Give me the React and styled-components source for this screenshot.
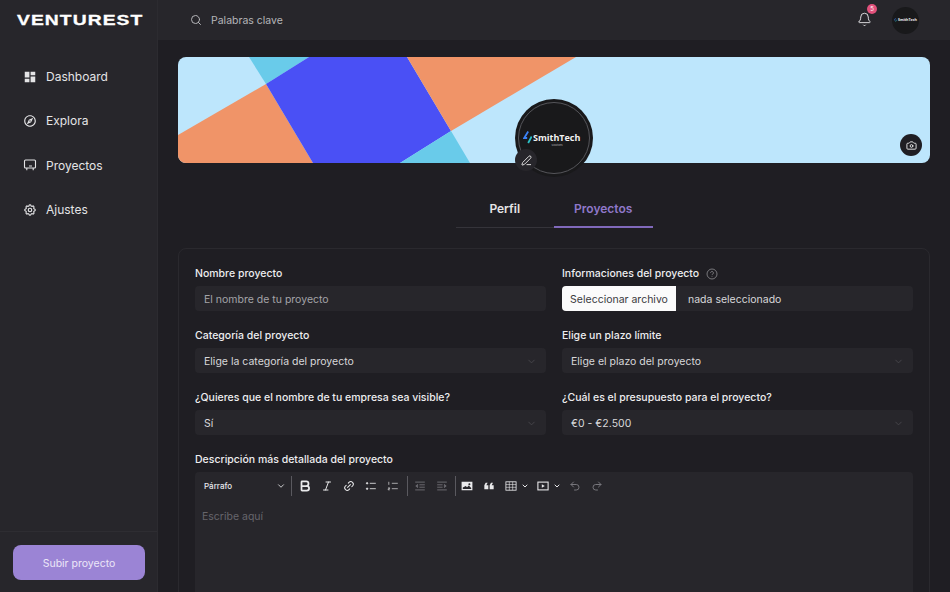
import React from "react";
import styled, { createGlobalStyle } from "styled-components";
import { MdDashboard, MdOutlineExplore, MdFormatQuote } from "react-icons/md";
import { TbSettings } from "react-icons/tb";
import { Search, Bell, Camera, ChevronDown, Bold, Italic, Link2, Undo2, Redo2, PenLine } from "lucide-react";

const Global = createGlobalStyle`
  html, body { margin: 0; height: 100%; background: #1f1e23; overflow: hidden; }
  * { box-sizing: border-box; }
  body { font-family: Inter, "Noto Sans", sans-serif; color: #e8e8ea; }
`;
const Shell = styled.div`display: flex; width: 950px; height: 592px; overflow: hidden;`;
const Sidebar = styled.aside`
  width: 158px; flex: none; display: flex; flex-direction: column; background: #27262b;
  border-right: 1px solid #2c2b30;
`;
const Brand = styled.div`height: 40px; display: flex; align-items: center; padding-left: 17px; overflow: hidden;`;
const BrandText = styled.span`
  font-family: "Liberation Sans", sans-serif; font-weight: 700; font-size: 14.5px; letter-spacing: .8px; color: #fff;
  transform: scaleX(1.33); transform-origin: left center; white-space: nowrap;
  -webkit-text-stroke: .3px #fff;
`;
const Nav = styled.nav`flex: 1; display: flex; flex-direction: column; padding: 14.5px 0 0 23px;`;
const NavItem = styled.a`
  height: 44.3px; display: flex; align-items: center; gap: 9px; font-size: 12px; color: #e4e4e6;
  svg { width: 14px; height: 14px; flex: none; }
`;
const SideFoot = styled.div`height: 61px; border-top: 1px solid #2e2d32; padding: 13px 13px 0;`;
const Upload = styled.button`
  width: 132px; height: 35px; border: 0; border-radius: 8px; background: #9b84d5; color: #ece6f8; padding: 2px 0 0;
  font: 400 10.5px Inter, sans-serif;
`;
const Column = styled.div`flex: 1; min-width: 0; display: flex; flex-direction: column;`;
const Header = styled.header`
  height: 40px; flex: none; background: #27262b; display: flex; align-items: center; padding: 0 31px 0 32px;
`;
const SearchBox = styled.div`flex: 1; display: flex; align-items: center; gap: 9px; color: #b5b5b9; font-size: 10.5px; svg { width: 12px; height: 12px; }`;
const BellWrap = styled.div`position: relative; width: 16px; height: 16px; margin-right: 19px; svg { width: 15px; height: 15px; color: #e4e4e6; display: block; stroke-width: 1.5; }`;
const Badge = styled.span`
  position: absolute; top: -8px; right: -4px; width: 10px; height: 10px; border-radius: 50%; background: #e2517c;
  color: #fff; font-size: 6px; line-height: 10px; text-align: center;
`;
const LogoCircle = styled.div`
  border-radius: 50%; background: #19191b; display: flex; flex-direction: column; align-items: center; justify-content: center;
  width: ${p => p.$size}px; height: ${p => p.$size}px; flex: none;
`;
const LogoRow = styled.div`display: flex; align-items: center; gap: 1px; margin-right: ${p => p.$shift || 0}px;`;
const LogoName = styled.span`font-family: "Open Sans", sans-serif; font-weight: 700; color: #f1f1f1; font-size: ${p => p.$small ? 3.6 : 9}px; line-height: 1;`;
const LogoSub = styled.span`font-size: 2.5px; color: #bbb; line-height: 1; margin: 1px 0 0 6px;`;
const Main = styled.main`flex: 1; min-height: 0; overflow: hidden; padding: 17px 20px 0;`;
const Banner = styled.div`position: relative; height: 106px;`;
const BannerArt = styled.svg`display: block; width: 752px; height: 106px; border-radius: 8px;`;
const Avatar = styled.div`position: absolute; left: 337px; top: 42px; width: 78px; height: 78px; border-radius: 50%; background: #19191b; padding: 3px;`;
const AvatarRing = styled.div`width: 72px; height: 72px; border-radius: 50%; border: 1px solid #55555a; padding-top: 3px; display: flex; align-items: center; justify-content: center; flex-direction: column;`;
const Round = styled.button`
  position: absolute; width: 22px; height: 22px; border-radius: 50%; border: 0; padding: 0; background: ${p => p.$bg};
  display: flex; align-items: center; justify-content: center; color: #eee; left: ${p => p.$x}px; top: ${p => p.$y}px;
  svg { width: 11px; height: 11px; }
`;
const Tabs = styled.div`display: flex; justify-content: center; margin-top: 32px;`;
const Tab = styled.div`
  width: 98.5px; height: 33px; text-align: center; font-size: 12px; font-weight: 600; line-height: 28px;
  color: ${p => p.$active ? "#8f78c9" : "#e4e4e6"};
  border-bottom: ${p => p.$active ? "2px solid #8069bb" : "1px solid #35343a"};
`;
const Card = styled.section`
  margin-top: 20px; border: 1px solid #2a292e; border-radius: 8px; padding: 17px 16px 0; height: 420px;
`;
const Grid = styled.div`display: grid; grid-template-columns: 351px 351px; column-gap: 16px; row-gap: 17px;`;
const Field = styled.div`display: flex; flex-direction: column; gap: 6px;`;
const Label = styled.label`font-size: 10.5px; font-weight: 500; line-height: 14px; height: 14px; padding-top: 2px; color: #ededef; display: flex; align-items: center; gap: 7px; white-space: nowrap;`;
const Help = styled.svg`width: 12px; height: 12px;`;
const Input = styled.div`
  height: 25px; border-radius: 4px; background: #27262b; padding: 2px 9px 0; font-size: 10.5px;
  color: ${p => p.$muted ? "#a4a4a8" : "#d8d8da"};
  display: flex; align-items: center; justify-content: space-between;
  svg { width: 11px; height: 11px; color: #47464c; }
`;
const FileRow = styled.div`height: 25px; border-radius: 4px; background: #27262b; display: flex; align-items: center; font-size: 10.5px; color: #d8d8da;`;
const FileButton = styled.span`width: 114px; height: 25px; padding-top: 1px; line-height: 25px; text-align: center; background: #fbfbfb; color: #3a3a3e; border-radius: 4px 0 0 4px; margin-right: 12px;`;
const FileName = styled.span`padding-top: 2px;`;
const Wide = styled.div`grid-column: 1 / -1; display: flex; flex-direction: column; gap: 6px;`;
const Editor = styled.div`background: #27262b; border-radius: 4px; height: 200px; padding: 0 1px;`;
const Toolbar = styled.div`height: 27px; display: flex; align-items: center; color: #e9e9eb; padding-left: 8px;`;
const Heading = styled.div`width: 82px; display: flex; justify-content: space-between; align-items: center; font-size: 8px; font-weight: 500; svg { width: 10px; height: 10px; }`;
const Sep = styled.i`width: 1px; height: 20px; flex: none; background: #5a595f; margin: 0 ${p => p.$m}px 0 ${p => p.$l}px;`;
const Tool = styled.span`
  width: 22px; height: 20px; display: flex; align-items: center; justify-content: center; flex: none;
  color: ${p => p.$dim ? "#77767c" : "#e9e9eb"};
  svg.ic { width: 12px; height: 12px; }
`;
const DropTool = styled.span`
  width: 32px; height: 20px; padding-left: 5px; display: flex; align-items: center; gap: 4px; flex: none;
  svg.ic { width: 12px; height: 12px; }
  svg.ch { width: 8px; height: 8px; stroke-width: 3; }
`;
const Placeholder = styled.div`padding: 11px 6px; font-size: 10.5px; color: #66656b;`;

const Bolt = ({ s = 12 }) => (
  <svg width={s * .72} height={s} viewBox="0 0 9 13" fill="none">
    <path d="M5 .5 1 7h3" stroke="#3b82f6" strokeWidth="1.8" />
    <path d="M8.5 5.5 5 12" stroke="#2cc4c9" strokeWidth="1.8" />
  </svg>
);
const Art = () => (
  <BannerArt viewBox="0 0 752 106" preserveAspectRatio="none">
    <rect width="752" height="106" fill="#bde6fc" />
    <polygon points="71,0 131,0 88,27" fill="#69cbea" />
    <polygon points="0,78 88,27 135,106 0,106" fill="#f09468" />
    <polygon points="88,27 131,0 229,0 273,74 222,106 135,106" fill="#4a50f5" />
    <polygon points="229,0 398,0 273,74" fill="#f09468" />
    <polygon points="273,74 292,106 222,106" fill="#69cbea" />
  </BannerArt>
);
const Ic = ({ children, fill }) => (
  <svg className="ic" viewBox="0 0 20 20" fill={fill || "none"} stroke={fill ? "none" : "currentColor"} strokeWidth="1.4">{children}</svg>
);
const Field1 = ({ label, children }) => <Field><Label>{label}</Label>{children}</Field>;
const Select = ({ children }) => <Input>{children}<ChevronDown /></Input>;

export default function App() {
  return (
    <Shell>
      <Global />
      <Sidebar>
        <Brand><BrandText>VENTUREST</BrandText></Brand>
        <Nav>
          <NavItem><MdDashboard />Dashboard</NavItem>
          <NavItem><MdOutlineExplore />Explora</NavItem>
          <NavItem>
            <svg viewBox="0 0 14 14" fill="none" stroke="currentColor" strokeWidth="1.1"><rect x="1.5" y="2" width="11" height="8" rx="1" /><path d="M3.8 10v2.2M10.2 10v2.2M6 8h3" /></svg>
            Proyectos
          </NavItem>
          <NavItem><TbSettings />Ajustes</NavItem>
        </Nav>
        <SideFoot><Upload>Subir proyecto</Upload></SideFoot>
      </Sidebar>
      <Column>
        <Header>
          <SearchBox><Search />Palabras clave</SearchBox>
          <BellWrap><Bell /><Badge>5</Badge></BellWrap>
          <LogoCircle $size={27}>
            <LogoRow><Bolt s={4} /><LogoName $small>SmithTech</LogoName></LogoRow>
          </LogoCircle>
        </Header>
        <Main>
          <Banner>
            <Art />
            <Avatar>
              <AvatarRing>
                <LogoRow $shift={5}><Bolt s={13} /><LogoName>SmithTech</LogoName></LogoRow>
                <LogoSub>Solutions</LogoSub>
              </AvatarRing>
            </Avatar>
            <Round $bg="#27262b" $x={337} $y={92}><PenLine /></Round>
            <Round $bg="#1f1e23" $x={722} $y={77}><Camera /></Round>
          </Banner>
          <Tabs>
            <Tab>Perfil</Tab>
            <Tab $active>Proyectos</Tab>
          </Tabs>
          <Card>
            <Grid>
              <Field1 label="Nombre proyecto"><Input $muted>El nombre de tu proyecto</Input></Field1>
              <Field>
                <Label>Informaciones del proyecto
                  <Help viewBox="0 0 12 12" fill="none" stroke="#8e8e92" strokeWidth=".8">
                    <circle cx="6" cy="6" r="5" />
                    <path d="M4.6 4.8a1.4 1.4 0 1 1 2.2 1.2c-.5.3-.8.6-.8 1.1M6 8.2v.7" />
                  </Help>
                </Label>
                <FileRow><FileButton>Seleccionar archivo</FileButton><FileName>nada seleccionado</FileName></FileRow>
              </Field>
              <Field1 label="Categoría del proyecto"><Select>Elige la categoría del proyecto</Select></Field1>
              <Field1 label="Elige un plazo límite"><Select>Elige el plazo del proyecto</Select></Field1>
              <Field1 label="¿Quieres que el nombre de tu empresa sea visible?"><Select>Sí</Select></Field1>
              <Field1 label="¿Cuál es el presupuesto para el proyecto?"><Select>€0 - €2.500</Select></Field1>
              <Wide>
                <Label>Descripción más detallada del proyecto</Label>
                <Editor>
                  <Toolbar>
                    <Heading>Párrafo<ChevronDown /></Heading>
                    <Sep $l={5} $m={2} />
                    <Tool><Bold className="ic" strokeWidth={3} style={{ width: 14, height: 14 }} /></Tool>
                    <Tool><Italic className="ic" /></Tool>
                    <Tool><Link2 className="ic" style={{ transform: "rotate(-45deg)" }} /></Tool>
                    <Tool><Ic><circle cx="3.5" cy="5.5" r="1.2" fill="currentColor" /><circle cx="3.5" cy="14.5" r="1.2" fill="currentColor" /><path d="M8 5.5h10M8 14.5h10" /></Ic></Tool>
                    <Tool><Ic><path d="M3 3v5M8 5.5h10M8 14.5h10M2 13h2.4v1.6H2v1.8h2.6" strokeWidth="1.1" /></Ic></Tool>
                    <Sep $l={3} $m={1} />
                    <Tool $dim><Ic><path d="M2 3.5h16M9 8h9M9 12h9M2 16.5h16M6 7.5 3 10l3 2.5z" /></Ic></Tool>
                    <Tool $dim><Ic><path d="M2 3.5h16M2 8h9M2 12h9M2 16.5h16M14 7.5l3 2.5-3 2.5z" /></Ic></Tool>
                    <Sep $l={2} $m={0} />
                    <Tool><Ic fill="currentColor"><path fillRule="evenodd" d="M1 3h18v14H1zm2 9.5V15h14v-1.5L13 9l-3 3-2-2zM14 5.5a1.7 1.7 0 1 0 0 3.4 1.7 1.7 0 0 0 0-3.4z" /></Ic></Tool>
                    <Tool><MdFormatQuote className="ic" style={{ width: 16, height: 16, transform: "rotate(180deg)" }} /></Tool>
                    <DropTool><Ic><rect x="1.5" y="3" width="17" height="14" /><path d="M1.5 7.6h17M1.5 12.2h17M7.2 3v14M12.8 3v14" strokeWidth="1" /></Ic><ChevronDown className="ch" /></DropTool>
                    <DropTool><Ic><rect x="1.5" y="3.5" width="17" height="13" strokeWidth="1.8" /><path d="M8 7v6l5-3z" fill="currentColor" stroke="none" /></Ic><ChevronDown className="ch" /></DropTool>
                    <Tool $dim><Undo2 className="ic" /></Tool>
                    <Tool $dim><Redo2 className="ic" /></Tool>
                  </Toolbar>
                  <Placeholder>Escribe aquí</Placeholder>
                </Editor>
              </Wide>
            </Grid>
          </Card>
        </Main>
      </Column>
    </Shell>
  );
}
